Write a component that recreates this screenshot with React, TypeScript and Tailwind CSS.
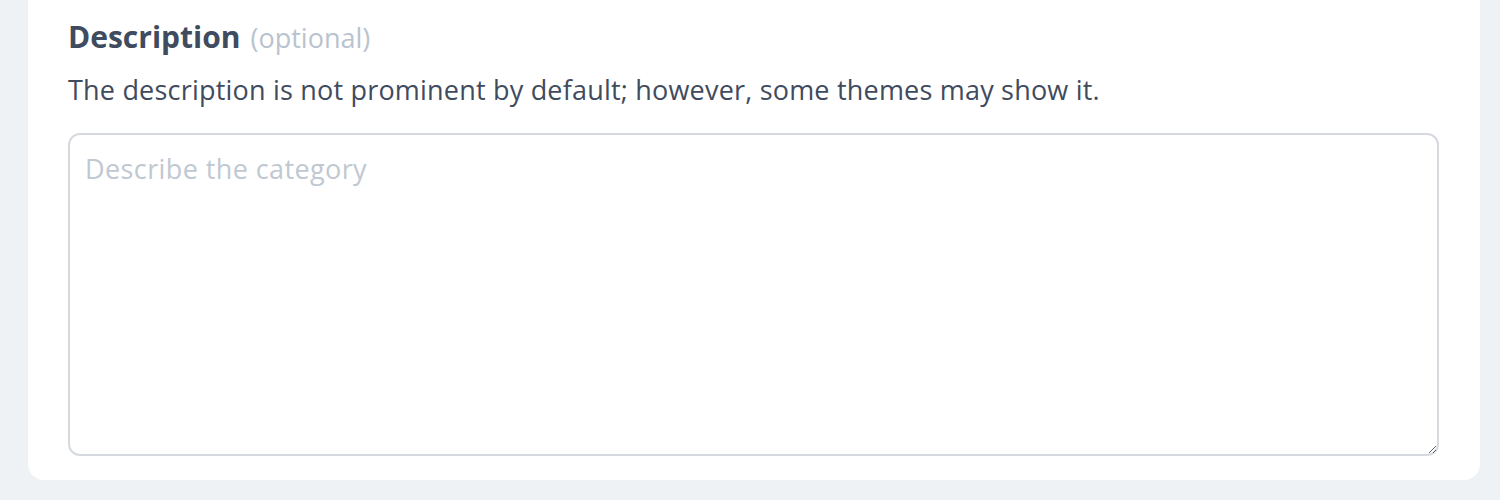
import React from "react";

export default function App() {
  return (
    <div className="w-[1500px] h-[500px] bg-[#eff2f5] overflow-hidden" style={{ fontFamily: "'Open Sans', 'Noto Sans', sans-serif" }}>
      <div className="mx-[28px] w-[1452px] h-[480px] bg-white rounded-b-[16px] px-[40px] pt-[17px]">
        <div className="flex items-baseline gap-[10px]">
          <span className="text-[30px] font-bold text-[#3f4b5e] leading-[40px]">Description</span>
          <span className="text-[27px] text-[#b9c3cf] leading-[40px]">(optional)</span>
        </div>
        <p className="mt-[14px] text-[27px] text-[#3f4b5e] leading-[36px] tracking-[0.2px]">
          The description is not prominent by default; however, some themes may show it.
        </p>
        <textarea
          className="mt-[25px] block w-[1371px] h-[323px] border-2 border-[#d6dadf] rounded-[12px] px-[15px] py-[14px] text-[27px] tracking-[0.4px] text-[#3f4b5e] placeholder:text-[#c0c8d1] outline-none resize"
          style={{ fontFamily: "'Open Sans', 'Noto Sans', sans-serif" }}
          placeholder="Describe the category"
        />
      </div>
    </div>
  );
}
